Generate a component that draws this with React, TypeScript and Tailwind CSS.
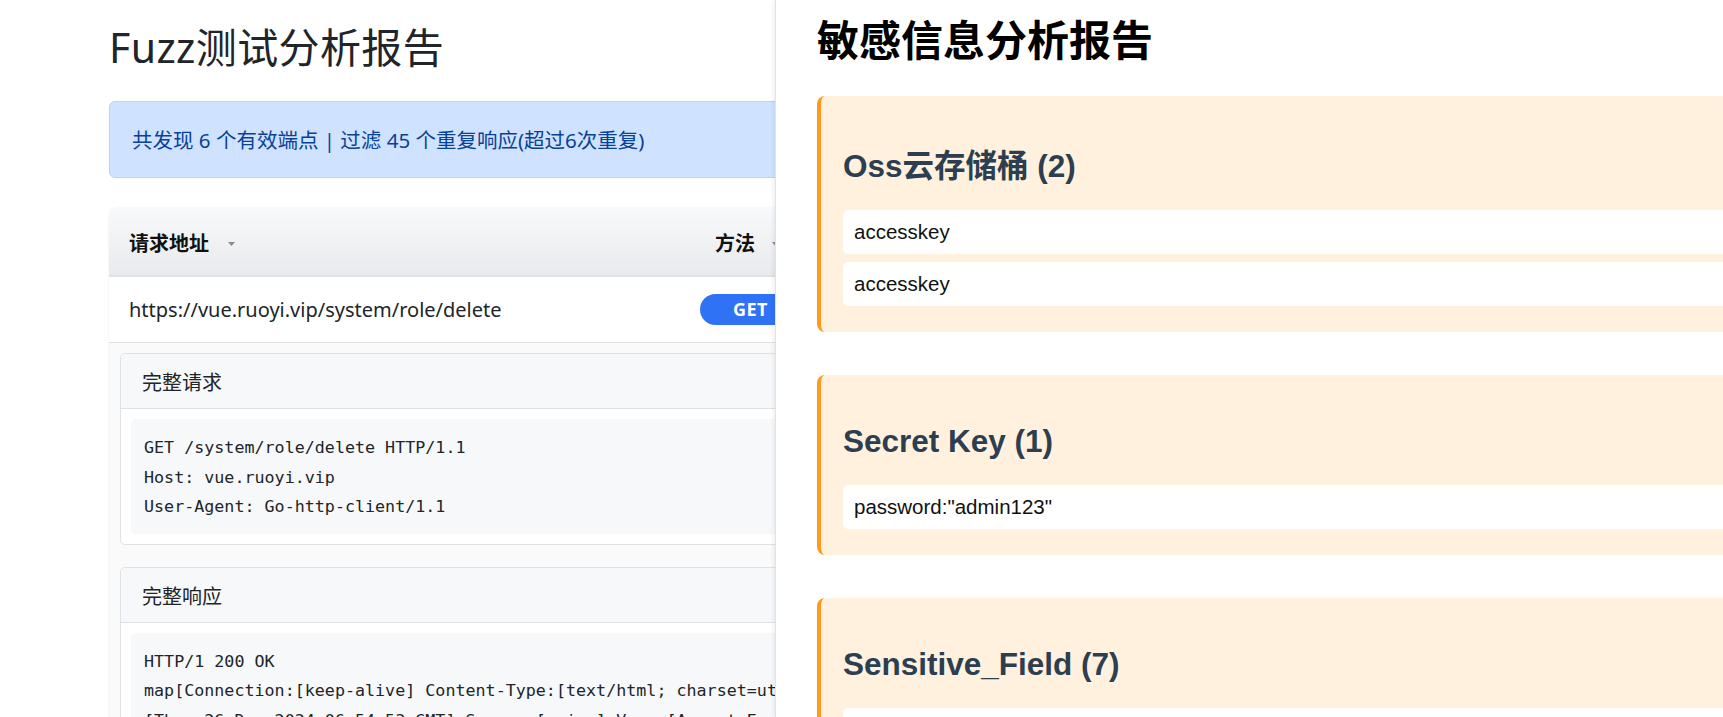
import React from "react";

const sans = "font-['Noto_Sans','Noto_Sans_CJK_SC',sans-serif]";
const mono = "font-['DejaVu_Sans_Mono','Noto_Sans_CJK_SC',monospace]";
const arial = "font-['Liberation_Sans','Noto_Sans_CJK_SC',sans-serif]";

function SortArrow() {
  return (
    <svg width="7" height="4" viewBox="0 0 7 4" className="shrink-0">
      <path d="M0 0 L7 0 L3.5 4 Z" fill="#8a8a8a" />
    </svg>
  );
}

function DetailCard({ title, lines, top }: { title: string; lines: string[]; top?: boolean }) {
  return (
    <div className={`rounded-[5px] border border-[#dee2e6] bg-white ${top ? "" : "mt-[22px]"}`}>
      <div className="flex h-[55px] items-center border-b border-[#dee2e6] bg-[#f7f8fa] pl-[21px] pt-[4px] text-[20px] text-[#212529] rounded-t-[5px]">
        {title}
      </div>
      <div className="p-[10px]">
        <div className={`rounded-[5px] bg-[#f6f8fa] px-[13px] pt-[14px] pb-[12px] ${mono} text-[16.7px] leading-[29.5px] text-[#212529] whitespace-pre overflow-hidden`}>
          {lines.map((l, i) => (
            <div key={i}>{l}</div>
          ))}
        </div>
      </div>
    </div>
  );
}

function Finding({ title, items, pt, first }: { title: string; items: string[]; pt: string; first?: boolean }) {
  return (
    <div className={`${first ? "" : "mt-[43px]"} mr-[-60px] rounded-lg border-l-4 border-[#ff9a1f] bg-[#fff1de] pl-[22px] pr-[10px] pb-[26px] ${pt}`}>
      <h2 className={`${arial} text-[31.5px] font-bold leading-[34px] text-[#2c3e50]`}>{title}</h2>
      <div className="mt-[27px] flex flex-col gap-[8px]">
        {items.map((it, i) => (
          <div key={i} className={`rounded-[5px] bg-white px-[11px] py-[10px] ${arial} text-[20.5px] leading-[24px] text-[#111]`}>
            {it}
          </div>
        ))}
      </div>
    </div>
  );
}

export default function App() {
  return (
    <div className="flex h-[717px] w-full overflow-hidden bg-white">
      {/* Left panel */}
      <div className={`w-[775px] shrink-0 overflow-hidden ${sans}`}>
        <div className="ml-[109px] w-[1100px]">
          <h1 className="pt-[23px] text-[41px] leading-[48px] font-normal tracking-[0.4px] text-[#212529]">Fuzz测试分析报告</h1>
          <div className="mt-[30px] flex h-[77px] items-center rounded-[6px] border border-[#b6d4fe] bg-[#cfe2ff] pl-[22px] text-[20.5px] leading-[30px] text-[#084298]">
            共发现 6 个有效端点 | 过滤 45 个重复响应(超过6次重复)
          </div>

          <div className="mt-[30px] rounded-t-[8px] shadow-[0_0_3px_rgba(0,0,0,0.08)]">
            <div className="grid h-[69px] grid-cols-[591px_1fr] items-center rounded-t-[8px] border-b-2 border-[#dee2e6] bg-gradient-to-b from-[#f8f9fa] to-[#e8eaed] pt-[4px]">
              <div className="flex items-center gap-[19px] pl-[20px] text-[20px] font-bold text-[#111]">
                <span>请求地址</span>
                <SortArrow />
              </div>
              <div className="flex items-center gap-[17px] pl-[15px] text-[20px] font-bold text-[#111]">
                <span>方法</span>
                <SortArrow />
              </div>
            </div>
            <div className="grid h-[66px] grid-cols-[591px_1fr] items-center border-b border-[#dee2e6] bg-white">
              <div className="pl-[20px] text-[20px] text-[#212529]">https://vue.ruoyi.vip/system/role/delete</div>
              <div>
                <span className="inline-flex h-[31px] items-center rounded-full bg-[#2f72f6] px-[33px] text-[18px] font-bold tracking-[0.5px] text-white">
                  GET
                </span>
              </div>
            </div>
            <div className="bg-[#fafafa] px-[11px] pt-[10px] pb-[10px]">
              <DetailCard
                top
                title="完整请求"
                lines={["GET /system/role/delete HTTP/1.1", "Host: vue.ruoyi.vip", "User-Agent: Go-http-client/1.1"]}
              />
              <DetailCard
                title="完整响应"
                lines={[
                  "HTTP/1 200 OK",
                  "map[Connection:[keep-alive] Content-Type:[text/html; charset=utf-8]",
                  "[Thu, 26 Dec 2024 06:54:53 GMT] Server:[nginx] Vary:[Accept-Encoding]]",
                  "",
                ]}
              />
            </div>
          </div>
        </div>
      </div>

      {/* Right panel */}
      <div className="relative min-w-0 flex-1 overflow-hidden border-l border-[#e2e2e2] bg-white pl-[41px] shadow-[-2px_0_4px_rgba(0,0,0,0.06)]">
        <h1 className={`${arial} pt-[17px] text-[42px] font-bold leading-[50px] text-black`}>敏感信息分析报告</h1>
        <div className="mt-[29px]">
          <Finding first title="Oss云存储桶 (2)" items={["accesskey", "accesskey"]} pt="pt-[53px]" />
          <Finding title="Secret Key (1)" items={['password:"admin123"']} pt="pt-[49px]" />
          <Finding
            title="Sensitive_Field (7)"
            items={["username", "password", "token", "secret", "key", "phone", "email"]}
            pt="pt-[49px]"
          />
        </div>
      </div>
    </div>
  );
}
